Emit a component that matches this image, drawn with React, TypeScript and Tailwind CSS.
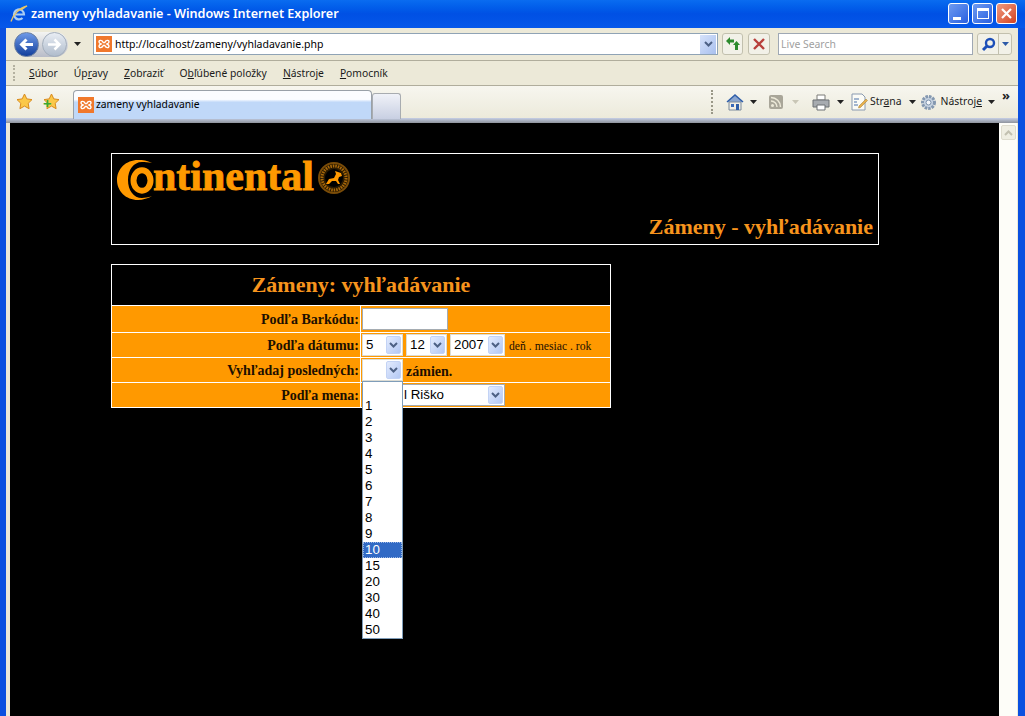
import React from "react"

const ui = "font-['Noto_Sans','Liberation_Sans',sans-serif]"
const serif = "font-['Liberation_Serif',serif]"
const arial = "font-['Liberation_Sans',Arial,sans-serif]"

const Xampp = () => (
  <svg width="16" height="16" viewBox="0 0 16 16" className="shrink-0">
    <rect width="16" height="16" fill="#f0782c" />
    <path d="M7 6.500C6.500 4 3 3.500 3 6c0 1 1 1.500 2 2-1 .5-2 1-2 2 0 2.500 3.500 2 4-.5M9 6.500C9.500 4 13 3.500 13 6c0 1-1 1.500-2 2 1 .5 2 1 2 2 0 2.500-3.500 2-4-.5M7 6.500h2M7 9.500h2" fill="none" stroke="#fff" strokeWidth="1.400" />
  </svg>
)

const Caret = ({ faded }: { faded?: boolean }) => (
  <svg width="7" height="4" viewBox="0 0 7 4" className="shrink-0">
    <path d="M0 0h7L3.500 4z" fill={faded ? "#c9c6b6" : "#222"} />
  </svg>
)

const Chevron = ({ color = "#4d6185" }: { color?: string }) => (
  <svg width="9" height="7" viewBox="0 0 9 7">
    <path d="M1 1l3.500 3.500L8 1" fill="none" stroke={color} strokeWidth="2" />
  </svg>
)

const ArrowBtn = () => (
  <span className="w-[15px] h-[18px] rounded-[2px] border border-[#c3d3f5] bg-gradient-to-br from-[#e3ebfd] to-[#b3c8f4] flex items-center justify-center shrink-0">
    <Chevron />
  </span>
)

const Select = ({ value, className }: { value: string; className: string }) => (
  <div className={`h-[22px] bg-white border border-[#dcdcd4] flex items-center justify-between pr-[1px] text-[13.33px] text-black ${arial} ${className}`}>
    <span className="pl-[3px]">{value}</span>
    <ArrowBtn />
  </div>
)

const Row = ({ label, tall, children }: { label: string; tall?: boolean; children: React.ReactNode }) => (
  <div className={`flex border-t border-white bg-[#ff9900] ${tall ? "h-[27px]" : "h-[25px]"}`}>
    <div className={`w-[248px] shrink-0 flex items-center justify-end pr-[1px] text-[14px] font-bold text-[#1c0f00] ${serif}`}>{label}</div>
    <div className="w-[1px] bg-white shrink-0" />
    <div className="flex-1 flex items-center gap-[3px] pl-[1px] relative">{children}</div>
  </div>
)

const MenuItem = ({ pre, u, post }: { pre?: string; u: string; post: string }) => (
  <span>{pre}<span className="underline">{u}</span>{post}</span>
)

const options = ["", "1", "2", "3", "4", "5", "6", "7", "8", "9", "10", "15", "20", "30", "40", "50"]

const Star = ({ className }: { className?: string }) => (
  <svg width="17" height="17" viewBox="0 0 17 17" className={className}>
    <path d="M8.500 1l2.300 4.900 5.200.7-3.800 3.700.9 5.400-4.600-2.600-4.600 2.600.9-5.400L1 6.600l5.200-.7z" fill="#fbc848" stroke="#d98a1c" />
  </svg>
)

const Logo = () => (
  <div className="flex items-start h-[44px] w-[240px]">
    <svg width="37" height="40" viewBox="0 0 37 41" preserveAspectRatio="none" className="shrink-0 mt-[5px]">
      <path d="M35 3C30 .5 26 0 21 0 9 0 0 9 0 20.500S9 41 21 41c5 0 10-1.500 14-4-4 1.500-7 2-10 2-8.500 0-14-8-14-18.500S16.500 2 25 2c3 0 6 .3 10 1z" fill="#ff9900" />
      <ellipse cx="25" cy="21" rx="8.500" ry="10.500" fill="none" stroke="#ff9900" strokeWidth="6" />
    </svg>
    <span className={`text-[42px] leading-[40px] font-bold text-[#ff9900] [-webkit-text-stroke:0.8px_#ff9900] ${serif} -ml-[1px] mt-[1px]`}>ntinental</span>
    <svg width="32" height="32" viewBox="0 0 32 32" className="shrink-0 ml-[4px] mt-[7px]">
      <circle cx="16" cy="16" r="15" fill="#2a1a00" stroke="#7a4c08" strokeWidth="2" />
      <circle cx="16" cy="16" r="12" fill="none" stroke="#a8680a" strokeWidth="3" strokeDasharray="1.500 1" />
      <circle cx="16" cy="16" r="9" fill="#000" />
      <path d="M8 22l3-5 5-1 2-4-1-3 6 2 1 3-3 1-1 3 2 4-2 0-2-3-4 0-3 3z" fill="#ff9900" />
    </svg>
  </div>
)

export default function App() {
  return (
    <div className={`w-[1025px] h-[716px] overflow-hidden flex flex-col bg-[#0a50e0] ${ui}`}>
      {/* title bar */}
      <div className="h-[28px] shrink-0 bg-gradient-to-b from-[#0a6cf0] via-[#0050e4] to-[#0658ea] flex items-center pl-[10px] pr-[8px]">
        <svg width="18" height="18" viewBox="0 0 18 18" className="shrink-0">
          <path d="M5 9.500h9a5 5 0 1 0-1.500 3.500" fill="none" stroke="#a8ccf4" strokeWidth="2.200" />
          <path d="M1 16.500C3 10 9 3 17 1c-3 2-5 3-6 4" fill="none" stroke="#e6c56a" strokeWidth="1.300" />
        </svg>
        <span className={`ml-[3px] text-white text-[12.600px] font-semibold ${ui}`}>zameny vyhladavanie - Windows Internet Explorer</span>
        <div className="ml-auto flex gap-[3px] -mt-[1px]">
          <div className="w-[21px] h-[21px] rounded-[3px] border border-white bg-gradient-to-br from-[#6f9af0] to-[#2a5fe0] relative">
            <span className="absolute left-[4px] bottom-[3px] w-[8px] h-[3px] bg-white" />
          </div>
          <div className="w-[21px] h-[21px] rounded-[3px] border border-white bg-gradient-to-br from-[#6f9af0] to-[#2a5fe0] flex items-center justify-center">
            <span className="w-[12px] h-[11px] border border-white border-t-[3px]" />
          </div>
          <div className="w-[21px] h-[21px] rounded-[3px] border border-white bg-gradient-to-br from-[#ee9a80] to-[#d2401c] flex items-center justify-center">
            <svg width="13" height="13" viewBox="0 0 13 13"><path d="M2 2l9 9M11 2l-9 9" stroke="#fff" strokeWidth="2.200" /></svg>
          </div>
        </div>
      </div>

      <div className="flex-1 min-h-0 flex pl-[6px] pr-[7px]">
        <div className="flex-1 min-w-0 flex flex-col bg-[#ece9d8]">
          {/* address bar */}
          <div className="h-[33px] shrink-0 flex items-center border-b border-[#b0ad9c] bg-[#ece9d8] pr-[6px]">
            <div className="ml-[8px] w-[54px] h-[25px] rounded-full bg-gradient-to-b from-[#f4f4f2] to-[#b8bcc8] relative shrink-0 flex items-center">
              <span className="w-[25px] h-[25px] rounded-full bg-gradient-to-b from-[#6f9ae8] to-[#123f9c] border border-[#6a7f9f] flex items-center justify-center">
                <svg width="15" height="13" viewBox="0 0 15 13"><path d="M14 6.500H4M7.500 1.500l-5 5 5 5" fill="none" stroke="#fff" strokeWidth="3" /></svg>
              </span>
              <span className="ml-[3px] w-[25px] h-[25px] rounded-full bg-gradient-to-b from-[#e8edf4] to-[#b0bccc] border border-[#a3aebc] flex items-center justify-center">
                <svg width="15" height="13" viewBox="0 0 15 13"><path d="M1 6.500h10M7.500 1.500l5 5-5 5" fill="none" stroke="#fff" strokeWidth="2.500" /></svg>
              </span>
            </div>
            <span className="ml-[6px] shrink-0"><Caret /></span>
            <div className="ml-[12px] w-[625px] h-[22px] bg-white border border-[#8fa3b5] flex items-center pl-[2px] pr-[1px] shrink-0">
              <Xampp />
              <span className={`ml-[3px] pt-[1px] text-[10.500px] text-black ${ui}`}>http://localhost/zameny/vyhladavanie.php</span>
              <span className="ml-auto w-[16px] h-[19px] bg-gradient-to-br from-[#d6e2fa] to-[#a9c0ee] flex items-center justify-center"><Chevron /></span>
            </div>
            <div className="ml-[4px] w-[21px] h-[22px] rounded-[3px] border border-[#c2c0ae] bg-[#f2f1e8] flex items-center justify-center shrink-0">
              <svg width="16" height="14" viewBox="0 0 16 14">
                <path d="M1 4l4-4v2.500h4v3H5V8z" fill="#2d8a2d" />
                <path d="M15 8l-3.500-4L8 8h2v5h3V8z" fill="#2d8a2d" />
              </svg>
            </div>
            <div className="ml-[5px] w-[22px] h-[22px] rounded-[3px] border border-[#c2c0ae] bg-[#f2f1e8] flex items-center justify-center shrink-0">
              <svg width="12" height="12" viewBox="0 0 12 12"><path d="M1 1l10 10M11 1L1 11" stroke="#b8403c" strokeWidth="2.400" /></svg>
            </div>
            <div className="ml-[8px] w-[195px] h-[22px] bg-white border border-[#9fa8b4] flex items-center pl-[2px] shrink-0">
              <span className={`pt-[1px] text-[10.400px] text-[#a0a0a0] ${ui}`}>Live Search</span>
            </div>
            <div className="ml-[4px] w-[35px] h-[22px] rounded-[3px] border border-[#c2c0ae] bg-[#f2f1e8] flex items-center shrink-0">
              <span className="flex-1 flex justify-center border-r border-[#c2c0ae] h-full items-center">
                <svg width="15" height="15" viewBox="0 0 15 15">
                  <circle cx="9" cy="6" r="4" fill="none" stroke="#1d4fb8" strokeWidth="2.400" />
                  <path d="M6 9l-4 4" stroke="#1d4fb8" strokeWidth="3" />
                </svg>
              </span>
              <span className="w-[12px] flex justify-center">
                <svg width="7" height="4" viewBox="0 0 7 4"><path d="M0 0h7L3.500 4z" fill="#2d5aa8" /></svg>
              </span>
            </div>
          </div>

          {/* menu bar */}
          <div className="h-[25px] shrink-0 flex items-center border-b border-[#b0ad9c] relative text-[10.300px] text-[#1a1a1a]">
            <span className="ml-[7px] h-[16px] w-[2px] border-l-2 border-dotted border-[#b4b1a0]" />
            <div className="ml-[14px] flex gap-[16px] pt-[1px]">
              <MenuItem u="S" post="úbor" />
              <MenuItem pre="Úp" u="r" post="avy" />
              <MenuItem u="Z" post="obraziť" />
              <MenuItem pre="O" u="b" post="ľúbené položky" />
              <MenuItem u="N" post="ástroje" />
              <MenuItem u="P" post="omocník" />
            </div>
          </div>

          {/* tab bar */}
          <div className="h-[32px] shrink-0 flex items-end bg-gradient-to-b from-[#f7f6ef] to-[#eceadb] relative">
            <div className="self-center flex items-center ml-[10px] gap-[10px] -mt-[1px]">
              <Star />
              <span className="relative w-[17px] h-[17px]">
                <Star />
                <span className="absolute left-0 top-[5px] text-[#39a834] text-[15px] font-bold leading-[11px]">+</span>
              </span>
            </div>
            <div className="ml-[13px] w-[299px] h-[29px] rounded-t-[4px] border border-b-0 border-[#99a0a8] bg-gradient-to-b from-[#fbfcff] from-[30%] to-[#c0d8f8] to-[40%] flex items-center pl-[4px] -mb-[1px]">
              <div className="flex items-center">
                <Xampp />
                <span className={`ml-[2px] text-[10.300px] text-black ${ui}`}>zameny vyhladavanie</span>
              </div>
            </div>
            <div className="w-[29px] h-[26px] rounded-t-[3px] border border-b-0 border-[#a8acb0] bg-gradient-to-b from-[#f0f2f8] to-[#c8cfe2] -mb-[1px]" />
            <div className="ml-auto self-center flex items-center text-[10.400px] text-[#1a1a1a] pr-[23px]">
              <span className="h-[24px] w-[2px] border-l-2 border-dotted border-[#9a9888]" />
              <svg width="18" height="18" viewBox="0 0 18 18" className="ml-[13px]">
                <path d="M1 9l8-7 8 7" fill="#8ba6d0" stroke="#2f5ea8" strokeWidth="1.500" />
                <path d="M3 9h12v8H3z" fill="#f3efe6" stroke="#7a8a9c" />
                <path d="M10 11h3v6h-3z" fill="#2f5ea8" />
                <path d="M5 11h3v3H5z" fill="#3a6ab8" />
              </svg>
              <span className="ml-[6px]"><Caret /></span>
              <span className="ml-[12px] w-[14px] h-[14px] rounded-[2px] bg-[#a9a699] relative overflow-hidden">
                <svg width="14" height="14" viewBox="0 0 14 14">
                  <circle cx="3.500" cy="10.500" r="1.500" fill="#ece9d8" />
                  <path d="M2 6a6 6 0 016 6M2 2.500A9.500 9.500 0 0111.500 12" fill="none" stroke="#ece9d8" strokeWidth="1.500" />
                </svg>
              </span>
              <span className="ml-[9px]"><Caret faded /></span>
              <svg width="18" height="17" viewBox="0 0 18 17" className="ml-[13px]">
                <path d="M5 1h8v5H5z" fill="#fff" stroke="#7c7c78" />
                <path d="M1 6h16v7H1z" fill="#a7abb0" stroke="#6d7074" />
                <path d="M5 11h8v5H5z" fill="#fff" stroke="#6d7074" />
              </svg>
              <span className="ml-[7px]"><Caret /></span>
              <svg width="17" height="18" viewBox="0 0 17 18" className="ml-[7px]">
                <path d="M1 1h10l3 3v13H1z" fill="#fbfbf6" stroke="#8a9ab0" />
                <path d="M3 6h5M3 9h3M3 12h4" stroke="#4a70a8" />
                <path d="M8 13l7-7 1.500 1.500-7 7-2 .5z" fill="#e8b04c" stroke="#9c7a30" strokeWidth=".5" />
              </svg>
              <span className="ml-[2px]">Str<span className="underline">a</span>na</span>
              <span className="ml-[7px]"><Caret /></span>
              <svg width="17" height="17" viewBox="0 0 17 17" className="ml-[4px]">
                <circle cx="8.500" cy="8.500" r="6" fill="#c8d4e2" stroke="#8498b0" strokeWidth="3" strokeDasharray="2.500 1" />
                <circle cx="8.500" cy="8.500" r="2.500" fill="#f3f6fa" stroke="#7a90aa" />
              </svg>
              <span className="ml-[4px]">Nástroj<span className="underline">e</span></span>
              <span className="ml-[6px]"><Caret /></span>
              <span className="absolute right-[8px] top-[2px] text-[13px] leading-[14px] font-bold text-[#222]">»</span>
            </div>
          </div>
          <div className="h-[5px] shrink-0 bg-gradient-to-b from-[#c6cfe6] to-[#8f949c]" />

          {/* page */}
          <div className="flex-1 min-h-0 flex pl-[4px] pr-[1px]">
            <div className="flex-1 min-w-0 bg-black pl-[101px] pt-[30px]">
              <div className="w-[768px] h-[92px] border border-white flex flex-col justify-between px-[5px] pt-[1px] pb-[2px]">
                <Logo />
                <div className={`text-right text-[22px] leading-[30px] font-bold text-[#f7941d] ${serif}`}>Zámeny - vyhľadávanie</div>
              </div>
              <div className="mt-[19px] w-[500px] border border-white bg-black">
                <div className={`h-[40px] text-center text-[22px] leading-[40px] font-bold text-[#f7941d] ${serif}`}>Zámeny: vyhľadávanie</div>
                <Row label="Podľa Barkódu:" tall>
                  <div className="w-[86px] h-[22px] bg-white border border-[#a5acb2]" />
                </Row>
                <Row label="Podľa dátumu:">
                  <Select value="5" className="w-[41px]" />
                  <Select value="12" className="w-[41px]" />
                  <Select value="2007" className="w-[55px]" />
                  <span className={`ml-[1px] mt-[3px] text-[11.700px] text-[#1c0f00] ${serif}`}>deň . mesiac . rok</span>
                </Row>
                <Row label="Vyhľadaj posledných:">
                  <Select value="" className="w-[41px]" />
                  <span className={`mt-[2px] text-[14px] font-bold text-[#1c0f00] ${serif}`}>zámien.</span>
                </Row>
                <Row label="Podľa mena:">
                  <div className={`w-[143px] h-[22px] bg-white border border-[#a5acb2] flex items-center justify-between pr-[1px] text-[13.33px] text-black ${arial}`}>
                    <span className="pl-[41px]">l Riško</span>
                    <ArrowBtn />
                  </div>
                  {/* open list of the "posledných" select */}
                  <div className={`absolute left-[1px] -top-[2px] w-[41px] bg-white border border-[#7f9db9] text-[13.33px] leading-[16px] text-black z-10 ${arial}`}>
                    {options.map((o, i) => (
                      <div key={i} className={`h-[16px] pl-[2px] ${o === "10" ? "bg-[#316ac5] text-white outline-1 -outline-offset-1 outline-dotted outline-[#9db8e4]" : ""}`}>{o}</div>
                    ))}
                  </div>
                </Row>
              </div>
            </div>
            {/* scrollbar */}
            <div className="w-[18px] shrink-0 bg-[#fdfdf8] pt-[2px] pl-[2px]">
              <div className="w-[15px] h-[15px] rounded-[2px] border border-[#dedcce] bg-[#efeee2] flex items-center justify-center">
                <svg width="9" height="6" viewBox="0 0 9 6"><path d="M1 5l3.500-3.500L8 5" fill="none" stroke="#c2c0b0" strokeWidth="2" /></svg>
              </div>
            </div>
          </div>
        </div>
      </div>
    </div>
  )
}
